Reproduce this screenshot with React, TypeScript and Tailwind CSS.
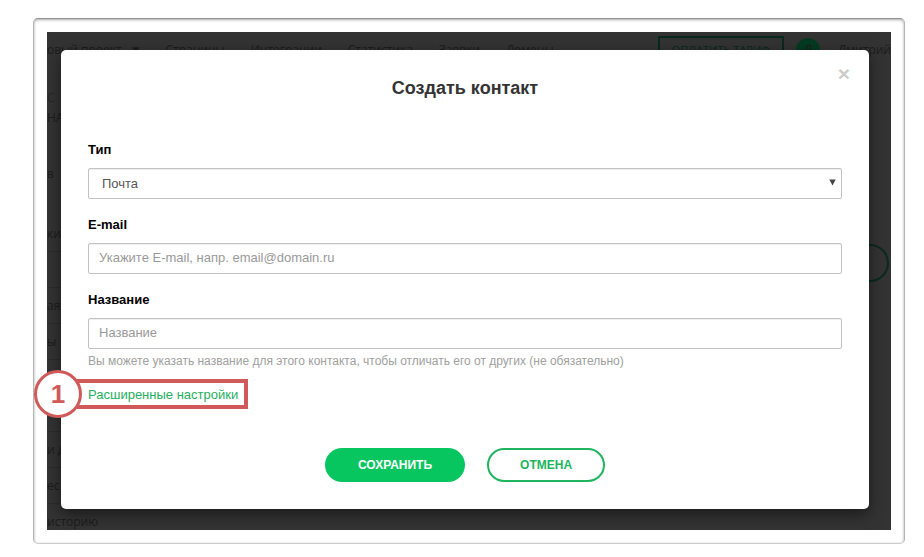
import type { ReactNode } from "react";

const navLinks = ["Страницы", "Интеграции", "Статистика", "Заявки", "Домены"];

const menuItems = ["ки", "", "ая", "ы", "", "", "и д", "ес", "историю"];

function Field({ id, label, children }: { id: string; label: string; children: ReactNode }) {
  return (
    <div className="flex flex-col gap-2.5">
      <label htmlFor={id} className="text-[13px] leading-4 font-bold text-black">
        {label}
      </label>
      {children}
    </div>
  );
}

// Dimmed project page that stays behind the dialog
function Backdrop() {
  return (
    <div
      aria-hidden="true"
      className="absolute inset-0 overflow-hidden bg-[#333333] font-['Open_Sans',sans-serif] text-xs leading-5 text-[#1c1c1c]"
    >
      <div className="flex h-9 items-center whitespace-nowrap">
        <span>овый проект</span>
        <span className="ml-2">▼</span>
        <div className="ml-6 flex gap-[26px]">
          {navLinks.map((link) => (
            <span key={link}>{link}</span>
          ))}
        </div>
        <span className="ml-auto border-2 border-[#08291c] px-3 py-0.5 text-[11px] text-[#08291c]">ОПЛАТИТЬ ТАРИФ</span>
        <span className="ml-3 flex size-6 items-center justify-center rounded-full bg-[#043a22]">Д</span>
        <span className="ml-[18px]">Дмитрий</span>
      </div>
      <div className="flex items-start justify-between pr-0.5">
        <div className="pt-5">
          <p className="text-[#262626]">С</p>
          <p>НА</p>
          <p className="mt-9">в</p>
          <ul className="mt-8">
            {menuItems.map((item, idx) => (
              <li key={idx} className="h-9 border-b border-[#2c2c2c] py-2">
                {item}
              </li>
            ))}
          </ul>
        </div>
        <div className="mt-44 h-[38px] w-28 rounded-full border-2 border-[#0b2a1f]" />
      </div>
    </div>
  );
}

function Callout({ step, children }: { step: number; children: ReactNode }) {
  return (
    <div className="relative w-fit">
      <div className="pointer-events-none absolute -top-2 -right-2.5 -bottom-1.5 -left-4 border-4 border-[#d05a5a]" />
      <div className="pointer-events-none absolute -top-[17px] -left-[54px] flex size-12 items-center justify-center rounded-full border-3 border-[#d05a5a] bg-white text-[26px] leading-7 font-bold text-[#d05a5a]">
        {step}
      </div>
      {children}
    </div>
  );
}

function ContactDialog() {
  const inputStyle =
    "h-[31px] w-full rounded-[2px] border border-[#c2c2c2] bg-white text-[13px] text-[#555555] outline-none shadow-[inset_0_1px_1px_rgba(0,0,0,0.07)]";

  return (
    <div
      role="dialog"
      aria-labelledby="dialog-title"
      className="relative mt-[18px] mr-[22px] mb-[21px] ml-3.5 rounded-[5px] bg-white px-[27px] pt-[26px] pb-[27px] shadow-[0_5px_15px_rgba(0,0,0,0.5)]"
    >
      <button
        type="button"
        aria-label="Закрыть"
        className="absolute top-3 right-[17px] flex h-6 w-4 items-center justify-center text-[21px] leading-6 font-bold text-[#cccccc]"
      >
        ×
      </button>
      <h1 id="dialog-title" className="text-center text-lg leading-6 font-bold text-[#333333]">
        Создать контакт
      </h1>

      <form className="mt-[42px]">
        <div className="flex flex-col gap-[18px]">
          <Field id="type" label="Тип">
            <div className="relative">
              <select id="type" className={`${inputStyle} appearance-none px-[13px]`}>
                <option>Почта</option>
              </select>
              <svg
                viewBox="0 0 7 7"
                className="pointer-events-none absolute top-[11px] right-1.5 size-[7px] fill-[#444444]"
              >
                <path d="M0.3 0.5h6.4L3.5 6.5z" />
              </svg>
            </div>
          </Field>
          <Field id="email" label="E-mail">
            <input
              id="email"
              type="email"
              placeholder="Укажите E-mail, напр. email@domain.ru"
              className={`${inputStyle} px-2.5 pb-0.5 placeholder:text-[#999999]`}
            />
          </Field>
          <Field id="name" label="Название">
            <input
              id="name"
              type="text"
              placeholder="Название"
              className={`${inputStyle} px-2.5 pb-0.5 placeholder:text-[#999999]`}
            />
          </Field>
        </div>
        <p className="mt-1 mb-[18px] text-xs leading-4 text-[#a0a0a0]">
          Вы можете указать название для этого контакта, чтобы отличать его от других (не обязательно)
        </p>
        <Callout step={1}>
          <a href="#advanced" className="relative block text-[13px] leading-4 text-[#27ae60]">
            Расширенные настройки
          </a>
        </Callout>

        <div className="mt-[45px] flex justify-center gap-[22px] text-xs font-bold">
          <button type="submit" className="h-[34px] rounded-full bg-[#07c660] px-[33px] text-white">
            СОХРАНИТЬ
          </button>
          <button type="button" className="h-[34px] rounded-full border-2 border-[#21b45f] px-[31px] text-[#21b45f]">
            ОТМЕНА
          </button>
        </div>
      </form>
    </div>
  );
}

export default function App() {
  return (
    <main className="bg-white pt-[18px] pr-[19px] pb-3 pl-[33px] font-['Liberation_Sans',Arial,sans-serif]">
      <div className="rounded-[5px] border border-x-[#b4b4b4] border-t-[#929292] border-b-[#cccccc] p-[13px] shadow-[inset_0_1px_3px_rgba(0,0,0,0.35)]">
        <div className="relative flow-root">
          <Backdrop />
          <ContactDialog />
        </div>
      </div>
    </main>
  );
}
